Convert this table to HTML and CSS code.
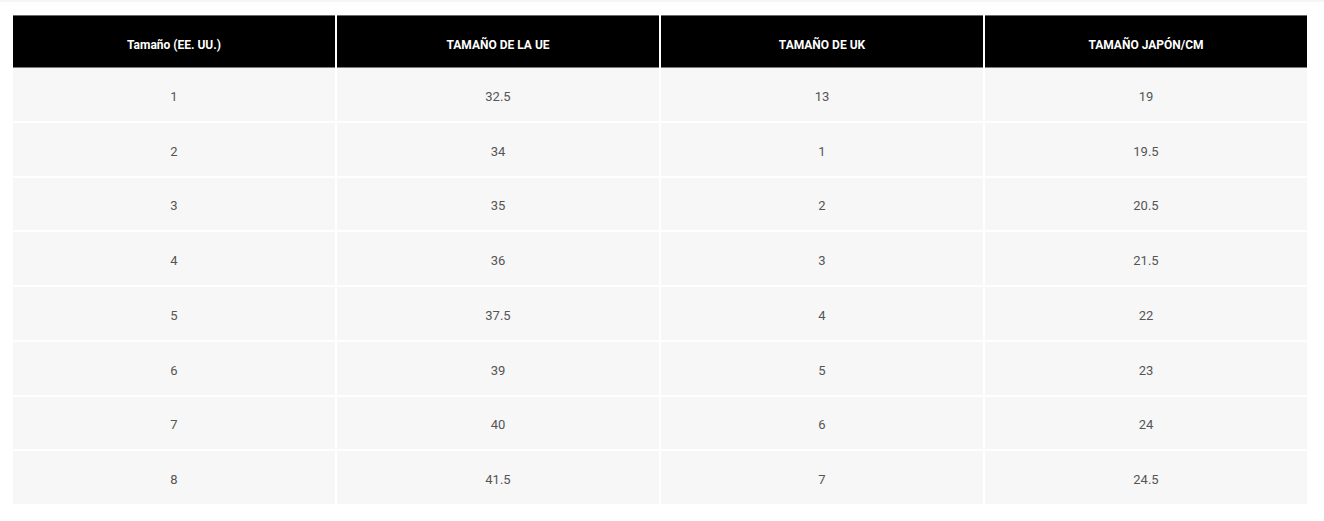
FILE: index.html
```html
<!DOCTYPE html>
<html lang="es">
<head>
<meta charset="utf-8">
<title>Tabla de tallas</title>
<link rel="stylesheet" href="styles.css">
</head>
<body>
<div class="topline"></div>
<table class="sizes">
  <thead>
    <tr>
      <th>Tamaño (EE. UU.)</th>
      <th>TAMAÑO DE LA UE</th>
      <th>TAMAÑO DE UK</th>
      <th>TAMAÑO JAPÓN/CM</th>
    </tr>
  </thead>
  <tbody>
    <tr><td>1</td><td>32.5</td><td>13</td><td>19</td></tr>
    <tr><td>2</td><td>34</td><td>1</td><td>19.5</td></tr>
    <tr><td>3</td><td>35</td><td>2</td><td>20.5</td></tr>
    <tr><td>4</td><td>36</td><td>3</td><td>21.5</td></tr>
    <tr><td>5</td><td>37.5</td><td>4</td><td>22</td></tr>
    <tr><td>6</td><td>39</td><td>5</td><td>23</td></tr>
    <tr><td>7</td><td>40</td><td>6</td><td>24</td></tr>
    <tr><td>8</td><td>41.5</td><td>7</td><td>24.5</td></tr>
  </tbody>
</table>
</body>
</html>
```

FILE: styles.css
```css
html, body {
  margin: 0;
  padding: 0;
  background: #ffffff;
}

body {
  font-family: Roboto, "Liberation Sans", Arial, sans-serif;
}

.topline {
  height: 2px;
  background: #f6f6f6;
}

.sizes {
  margin: 13px 0 0 11px;
  width: 1298px;
  table-layout: fixed;
  border-collapse: separate;
  border-spacing: 2px 0;
}

.sizes th {
  height: 53px;
  padding: 6px 0 0;
  box-sizing: border-box;
  background: #000000;
  color: #ffffff;
  font-size: 12px;
  font-weight: 700;
  text-align: center;
  vertical-align: middle;
  border-top: 1px solid #6a6a6a;
  border-bottom: 1px solid #7a7a7a;
}

.sizes td {
  height: 52.75px;
  padding: 4px 0 0;
  box-sizing: border-box;
  background: #f7f7f7;
  color: #555555;
  font-size: 13px;
  text-align: center;
  vertical-align: middle;
}

.sizes tbody tr + tr td {
  height: 54.75px;
  border-top: 2px solid #ffffff;
}
```
